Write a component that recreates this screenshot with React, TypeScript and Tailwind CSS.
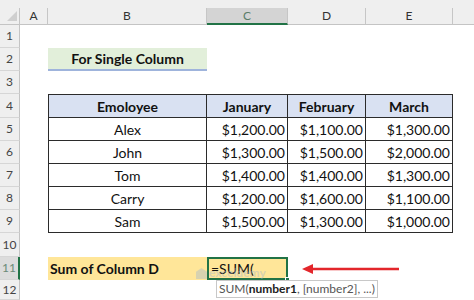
import type { ReactNode } from "react";

const FONT = { fontFamily: "Lato, 'Open Sans', Arial, sans-serif" };

type Row = { name: string; jan: string; feb: string; mar: string };

const rows: Row[] = [
  { name: "Alex", jan: "$1,200.00", feb: "$1,100.00", mar: "$1,300.00" },
  { name: "John", jan: "$1,300.00", feb: "$1,500.00", mar: "$2,000.00" },
  { name: "Tom", jan: "$1,400.00", feb: "$1,400.00", mar: "$1,300.00" },
  { name: "Carry", jan: "$1,200.00", feb: "$1,600.00", mar: "$1,100.00" },
  { name: "Sam", jan: "$1,500.00", feb: "$1,300.00", mar: "$1,000.00" },
];

function RowHead({ n, h, active }: { n: number; h: string; active?: boolean }) {
  return (
    <div
      className={`flex w-[20px] shrink-0 items-center justify-center border-b border-[#d6d6d6] text-[12px] ${h} ${
        active ? "border-r-2 border-r-[#217346] bg-[#dcdcdc] text-[#6b8a78]" : "border-r border-r-[#c4c4c4] bg-[#efefef] text-[#444]"
      }`}
    >
      {n}
    </div>
  );
}

function Line({ n, h = "h-[23px]", active, children }: { n: number; h?: string; active?: boolean; children?: ReactNode }) {
  return (
    <div className="flex">
      <RowHead n={n} h={h} active={active} />
      <div className="w-[28px] shrink-0" />
      {children}
    </div>
  );
}

function ColHead({ label, w, active }: { label: string; w: string; active?: boolean }) {
  return (
    <div
      className={`flex h-[17px] shrink-0 items-center justify-center border-r border-[#c6c6c6] text-[12px] ${w} ${
        active ? "border-b-2 border-b-[#217346] bg-[#d4d4d4] text-[#5a7d69]" : "border-b border-b-[#c4c4c4] text-[#333]"
      }`}
    >
      {label}
    </div>
  );
}

function DataRow({ n, r }: { n: number; r: Row }) {
  return (
    <Line n={n} h="h-[23px]">
      <div className="flex h-[23px] w-[159px] shrink-0 items-center justify-center border-b border-l border-r border-[#2b2b2b]">
        {r.name}
      </div>
      <div className="flex h-[23px] w-[81px] shrink-0 items-center justify-end border-b border-r border-[#2b2b2b] pr-[2px]">
        {r.jan}
      </div>
      <div className="flex h-[23px] w-[78px] shrink-0 items-center justify-end border-b border-r border-[#2b2b2b] pr-[2px]">
        {r.feb}
      </div>
      <div className="flex h-[23px] w-[87px] shrink-0 items-center justify-end border-b border-r border-[#2b2b2b] pr-[2px]">
        {r.mar}
      </div>
    </Line>
  );
}

export default function App() {
  return (
    <div className="relative h-[300px] w-[474px] overflow-hidden bg-white text-[14px] text-[#111]" style={FONT}>
      {/* column headers */}
      <div className="flex h-[25px] bg-[#efefef] pt-[8px]">
        <div className="relative h-[17px] w-[20px] shrink-0 border-b border-r border-[#c4c4c4]">
          <svg className="absolute right-[2px] bottom-[3px]" width="10" height="10" viewBox="0 0 10 10">
            <polygon points="10,0 10,10 0,10" fill="#cfcfcf" />
          </svg>
        </div>
        <ColHead label="A" w="w-[28px]" />
        <ColHead label="B" w="w-[159px]" />
        <ColHead label="C" w="w-[81px]" active />
        <ColHead label="D" w="w-[78px]" />
        <ColHead label="E" w="w-[87px]" />
        <div className="h-[17px] flex-1 border-b border-[#c4c4c4]" />
      </div>

      <Line n={1} />
      <Line n={2}>
        <div className="flex h-[23px] w-[159px] shrink-0 items-center justify-center border-b-2 border-[#9fb4dc] bg-[#e2efda] font-bold">
          For Single Column
        </div>
      </Line>
      <Line n={3} />
      <Line n={4} h="h-[24px]">
        <div className="flex h-[24px] w-[159px] shrink-0 items-center justify-center border border-[#2b2b2b] bg-[#d9e1f2] font-bold">
          Emoloyee
        </div>
        <div className="flex h-[24px] w-[81px] shrink-0 items-center justify-center border-y border-r border-[#2b2b2b] bg-[#d9e1f2] font-bold">
          January
        </div>
        <div className="flex h-[24px] w-[78px] shrink-0 items-center justify-center border-y border-r border-[#2b2b2b] bg-[#d9e1f2] font-bold">
          February
        </div>
        <div className="flex h-[24px] w-[87px] shrink-0 items-center justify-center border-y border-r border-[#2b2b2b] bg-[#d9e1f2] font-bold">
          March
        </div>
      </Line>
      {rows.map((r, i) => (
        <DataRow key={r.name} n={i + 5} r={r} />
      ))}
      <Line n={10} h="h-[24px]" />
      <Line n={11} active>
        <div className="flex h-[23px] w-[159px] shrink-0 items-center bg-[#ffe699] pl-[2px] font-bold">Sum of Column D</div>
        <div className="relative flex h-[23px] w-[81px] shrink-0 items-center border-2 border-[#217346] bg-[#ffe699] pl-[2px]">
          =SUM(
          <div className="absolute -right-[4px] -bottom-[4px] h-[5px] w-[5px] border border-white bg-[#217346]" />
        </div>
        <div className="flex h-[23px] flex-1 items-center pl-[14px]">
          <svg width="98" height="12" viewBox="0 0 98 12">
            <line x1="8" y1="6" x2="97" y2="6" stroke="#e3262b" strokeWidth="2.5" />
            <polygon points="0,6 11,1 11,11" fill="#e3262b" />
          </svg>
        </div>
      </Line>
      <Line n={12} h="h-[20px]" />

      {/* watermark */}
      <div className="pointer-events-none absolute left-[196px] top-[266px] flex items-center gap-[2px] text-[12px] leading-[14px] font-bold text-[#9db6d4] opacity-40">
        <svg width="11" height="11" viewBox="0 0 12 12">
          <path d="M6 0 L12 4 L12 12 L0 12 L0 4 Z" fill="#9db6d4" />
        </svg>
        exceldemy
      </div>

      {/* function tooltip */}
      <div className="absolute left-[216px] top-[280px] h-[18px] border border-[#c8c8c8] bg-white px-[2px] text-[12px] leading-[16px] text-[#555]">
        SUM(<span className="font-bold text-[#222]">number1</span>, [number2], ...)
      </div>
    </div>
  );
}
